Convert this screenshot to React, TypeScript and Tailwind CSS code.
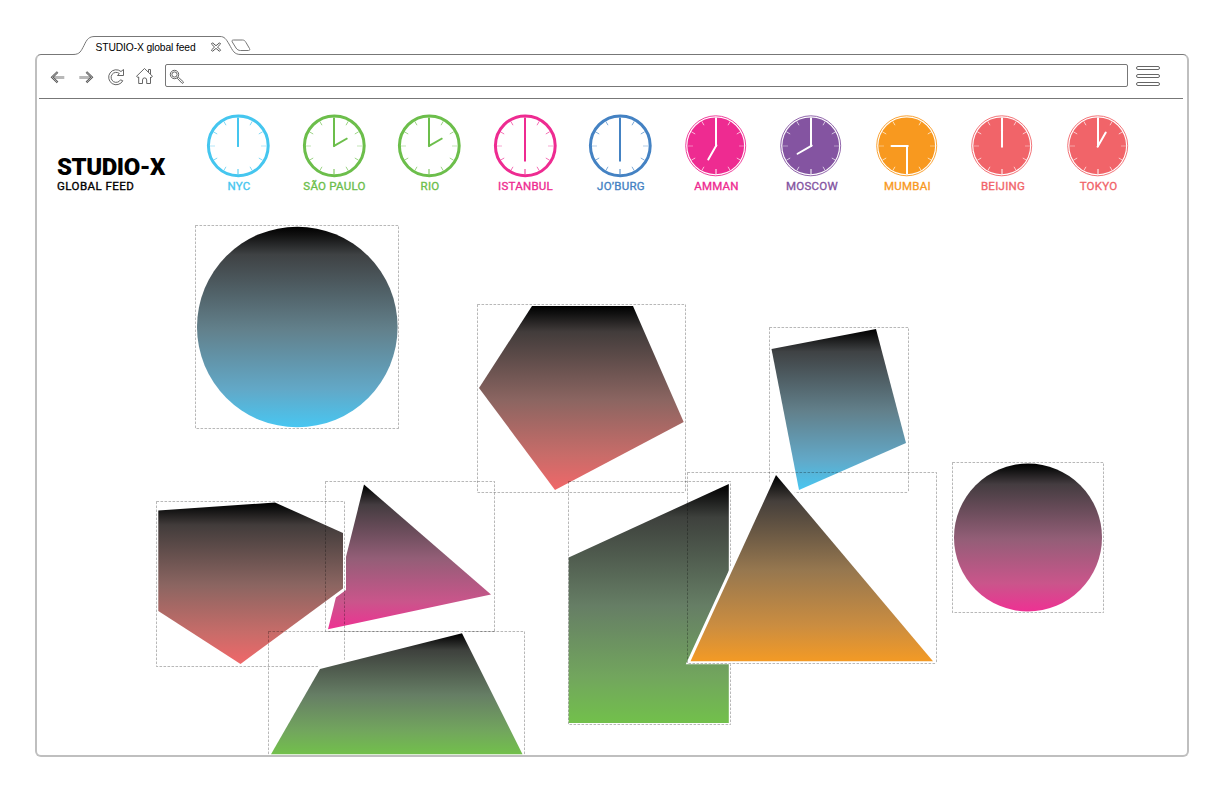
import React from "react";

type ClockProps = { city: string; color: string; hour: number; minute?: number; solid?: boolean };

const CLOCKS: ClockProps[] = [
  { city: "NYC", color: "#45c6ef", hour: 0 },
  { city: "SÃO PAULO", color: "#6cbe4b", hour: 60 },
  { city: "RIO", color: "#6cbe4b", hour: 60 },
  { city: "ISTANBUL", color: "#ee2b91", hour: 180 },
  { city: "JO’BURG", color: "#4482c3", hour: 180 },
  { city: "AMMAN", color: "#ee2b91", hour: 210, solid: true },
  { city: "MOSCOW", color: "#8454a1", hour: 240, solid: true },
  { city: "MUMBAI", color: "#f8991f", hour: 270, minute: 180, solid: true },
  { city: "BEIJING", color: "#f16469", hour: 0, solid: true },
  { city: "TOKYO", color: "#f16469", hour: 30, solid: true },
];

function Clock({ city, color, hour, minute = 0, solid }: ClockProps) {
  const ink = solid ? "#ffffff" : color;
  return (
    <div className="flex w-[95.5px] shrink-0 flex-col items-center">
      <svg className="block h-16 w-16" viewBox="-32 -32 64 64" fill="none">
        {solid ? (
          <>
            <circle cx="-0.3" cy="-0.2" r="30" stroke={color} strokeWidth="0.9" />
            <circle cx="-0.3" cy="-0.2" r="28.4" fill={color} />
          </>
        ) : (
          <circle cx="0.3" cy="-0.2" r="29.9" stroke={color} strokeWidth="3" />
        )}
        {[30, 60, 90, 120, 150, 180, 210, 240, 270, 300, 330].map((a) => (
          <line
            key={a}
            y1={a % 90 === 0 ? -23 : -24}
            y2="-28.4"
            stroke={ink}
            strokeWidth={a === 180 ? 1 : 0.8}
            strokeOpacity={a === 180 ? 1 : a % 90 === 0 ? 0.5 : 0.75}
            transform={`rotate(${a})`}
          />
        ))}
        <line y1="0.8" y2={minute ? -28 : -28.5} stroke={ink} strokeWidth="2" transform={`rotate(${minute})`} />
        <line y1="0.8" y2="-15.5" stroke={ink} strokeWidth="2" strokeLinecap={solid ? "round" : "butt"} transform={`rotate(${hour})`} />
      </svg>
      <span
        className="mt-[1px] ml-[1.5px] whitespace-nowrap text-[11.5px] leading-[14px] font-normal tracking-[0.25px] [-webkit-text-stroke:0.35px]"
        style={{ color }}
      >
        {city}
      </span>
    </div>
  );
}

type ShapeProps = { id: string; points?: string; circle?: [number, number, number] };

function Shape({ id, points, circle }: ShapeProps) {
  const fill = `url(#${id})`;
  return circle ? (
    <circle cx={circle[0]} cy={circle[1]} r={circle[2]} fill={fill} />
  ) : (
    <polygon points={points} fill={fill} stroke="#fff" strokeWidth="6" style={{ paintOrder: "stroke" }} />
  );
}

function Box({ x, y, x2, y2 }: { x: number; y: number; x2: number; y2: number }) {
  return (
    <path
      d={`M${x} ${y}H${x2}V${y2}M${x} ${y}V${y2}H${x2}`}
      fill="none"
      stroke="#000"
      strokeOpacity="0.28"
      strokeWidth="1"
      strokeDasharray="2.6 1.4"
    />
  );
}

const GRADIENTS: [string, string, string, string, string][] = [
  ["cyan", "#3f4244", "#62808b", "#62a8c7", "#48c6f1"],
  ["coral", "#423c3b", "#8b6561", "#c86c69", "#f06769"],
  ["pink", "#443c40", "#935e77", "#ca558b", "#ee3193"],
  ["green", "#3e413d", "#667e65", "#72a65d", "#72c04b"],
  ["orange", "#453f3b", "#96774f", "#cb8d40", "#f39a25"],
];

function Canvas() {
  return (
    <svg className="block h-[555px] w-[1150px]" viewBox="37 200 1150 555">
      <defs>
        {GRADIENTS.map(([id, a, b, c, d]) => (
          <linearGradient key={id} id={id} x1="0" y1="0" x2="0" y2="1">
            <stop offset="0" stopColor="#000" />
            <stop offset="0.04" stopColor="#101010" />
            <stop offset="0.14" stopColor={a} />
            <stop offset="0.51" stopColor={b} />
            <stop offset="0.81" stopColor={c} />
            <stop offset="1" stopColor={d} />
          </linearGradient>
        ))}
      </defs>
      <Shape id="cyan" circle={[297.3, 327, 100.3]} />
      <Box x={195.5} y={225.5} x2={398.5} y2={428.5} />
      <Shape id="coral" points="532,306 633,306 683.7,422 555,490 479,388" />
      <Box x={477.5} y={304.5} x2={685.5} y2={492.5} />
      <Shape id="cyan" points="771.5,349 876,329 906,443 799,490" />
      <Box x={769.5} y={327.5} x2={908.5} y2={492.5} />
      <Shape id="pink" circle={[1028, 537.5, 74]} />
      <Box x={952.5} y={462.5} x2={1103.5} y2={612.5} />
      <Shape id="pink" points="364,484.5 491,594.5 328,629.3" />
      <Shape id="coral" points="158.3,510.5 275,502.5 343,533 343,588.5 240.5,664 158.3,611" />
      <Box x={325.5} y={481.5} x2={494.5} y2={631.5} />
      <Box x={156.5} y={501.5} x2={344.5} y2={666.5} />
      <Shape id="green" points="320,669 462,633.3 522.5,754.3 271,754.3" />
      <Box x={268.5} y={631.5} x2={524.5} y2={757} />
      <Shape id="green" points="568.7,557.5 728.8,484 728.8,723 568.7,723" />
      <Box x={568.5} y={481.5} x2={730.5} y2={724.5} />
      <Shape id="orange" points="776,475 933,661.2 690.5,661.2" />
      <Box x={687.5} y={472.5} x2={936.5} y2={663.5} />
    </svg>
  );
}

function TabStrip() {
  return (
    <div className="relative z-10 ml-[38px] grid h-[19px] w-[180px]">
      <svg className="col-start-1 row-start-1 block h-[19px] w-[180px]" viewBox="73 36 180 19" fill="none">
        <path
          d="M73 54.5C80 54.5 81 51 84 45.5C87 39 89 36.5 95 36.5H220C224.500 36.500 226 39 229 44C233 51 234 54.500 241 54.500V56H73Z"
          fill="#fff"
        />
        <path
          d="M73 54.5C80 54.5 81 51 84 45.5C87 39 89 36.5 95 36.5H220C224.500 36.500 226 39 229 44C233 51 234 54.500 241 54.500"
          stroke="#777"
        />
        <path
          d="M233.500 40H242.500C244 40 245.300 41 246 42.500L249.500 48.500C250.200 50 249.500 50.500 248.500 50.500H240.500C238.500 50.500 237 49.500 236 48L232.300 42C231.700 40.700 232 40 233.500 40Z"
          fill="#fff"
          stroke="#777"
        />
        <path
          d="M212.500 42.800L216 45.700L219.500 42.800L220.600 44L217.500 47L220.600 50.100L219.500 51.300L216 48.400L212.500 51.300L211.400 50.100L214.500 47L211.400 44Z"
          stroke="#444"
          strokeWidth="0.9"
        />
      </svg>
      <span className="col-start-1 row-start-1 mt-[6px] ml-[22.500px] whitespace-nowrap font-['Liberation_Sans',Arial,sans-serif] text-[10.300px] leading-[12px] tracking-[-0.120px] text-black">
        STUDIO-X global feed
      </span>
    </div>
  );
}

function Toolbar() {
  return (
    <div className="mr-[4px] ml-[2px] flex h-[44px] items-start border-b border-[#777] pr-[23px] pl-[11px]">
      <svg className="mt-[11px] block h-6 w-[104px] shrink-0" viewBox="50 66 104 24" fill="none" stroke="#555" strokeWidth="0.9">
        <path d="M53 77.500H64.300" stroke="#b8b8b8" strokeWidth="3" />
        <path d="M57.600 72L52.200 77.200L57.600 82.400" stroke="#555" strokeWidth="2.200" />
        <path d="M57.600 72L52.200 77.200L57.600 82.400" stroke="#ddd" strokeWidth="0.700" />
        <path d="M79.300 77.500H91" stroke="#b8b8b8" strokeWidth="3" />
        <path d="M86.400 72L91.800 77.200L86.400 82.400" stroke="#555" strokeWidth="2.200" />
        <path d="M86.400 72L91.800 77.200L86.400 82.400" stroke="#ddd" strokeWidth="0.700" />
        <path d="M121 71.500L123.500 69.500V75.500H117.500L119.300 73.500A5 5 0 1 0 120.500 79.800L122.800 80.800A7.500 7.500 0 1 1 121 71.500Z" />
        <path d="M144.500 68.500L152.500 76.300L151 77.500L150.500 77V83.500H146.700V80A2.100 2.100 0 0 0 142.500 80V83.500H138.700V77L138 77.500L136.500 76.300Z" />
        <path d="M148.500 72V69.500H150.500V74" />
      </svg>
      <div className="mt-[9px] ml-[11px] flex h-[23px] flex-1 items-start rounded-[2px] border border-[#777]">
        <svg className="mt-[4px] ml-[3px] block h-4 w-4" viewBox="169 69 16 16" fill="none" stroke="#555" strokeWidth="0.9">
          <circle cx="174.500" cy="74.500" r="4.200" />
          <circle cx="174.500" cy="74.500" r="2.600" />
          <path d="M177.200 78.200L178.300 77.200L183.300 81.800A1 1 0 0 1 182 83.200Z" />
        </svg>
      </div>
      <div className="mt-[11px] ml-2 flex w-6 flex-col gap-1">
        <span className="block h-1 rounded-full border border-[#666]" />
        <span className="block h-1 rounded-full border border-[#666]" />
        <span className="block h-1 rounded-full border border-[#666]" />
      </div>
    </div>
  );
}

export default function App() {
  return (
    <div className="h-[792px] w-[1224px] overflow-hidden bg-white px-[35px] pt-9 font-[Roboto,'Noto_Sans',sans-serif]">
      <TabStrip />
      <main className="-mt-px flex h-[703px] w-[1154px] flex-col overflow-hidden rounded-[6px] border-2 border-t border-[#bfbfbf] border-t-[#777]">
        <Toolbar />
        <header className="flex h-[101px] shrink-0 pt-[15px]">
          <div className="ml-5 flex w-[133.5px] shrink-0 flex-col pt-[41px]">
            <h1 className="whitespace-nowrap text-[24px] leading-6 font-black tracking-[-0.45px] text-black">STUDIO-X</h1>
            <p className="whitespace-nowrap text-[11.5px] leading-[14px] font-normal tracking-[0.45px] text-black [-webkit-text-stroke:0.35px]">
              GLOBAL FEED
            </p>
          </div>
          <div className="flex">
            {CLOCKS.map((c) => (
              <Clock key={c.city} {...c} />
            ))}
          </div>
        </header>
        <Canvas />
      </main>
    </div>
  );
}
